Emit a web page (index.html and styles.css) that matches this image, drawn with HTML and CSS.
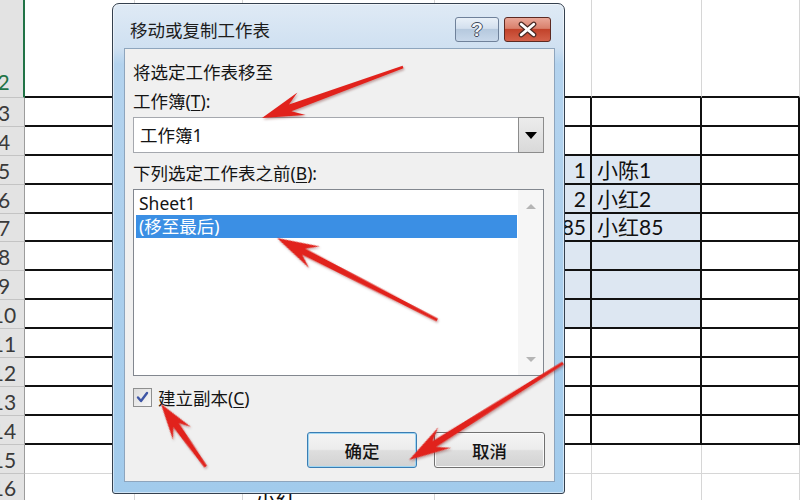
FILE: index.html
```html
<!DOCTYPE html>
<html>
<head>
<meta charset="utf-8">
<link rel="stylesheet" href="styles.css">
</head>
<body>
<div class="screen">
  <div class="sheet">
    <div class="hdr sel">2</div><div class="c r2"></div><div class="c r2"></div><div class="c r2"></div><div class="c r2"></div><div class="c r2"></div><div class="c r2"></div>
    <div class="hdr">3</div><div class="c t"></div><div class="c t"></div><div class="c t"></div><div class="c t"></div><div class="c t"></div><div class="c t"></div>
    <div class="hdr">4</div><div class="c t"></div><div class="c t"></div><div class="c t"></div><div class="c t"></div><div class="c t"></div><div class="c t"></div>
    <div class="hdr">5</div><div class="c t"></div><div class="c t"></div><div class="c t"></div><div class="c t blue num">1</div><div class="c t blue">小陈1</div><div class="c t"></div>
    <div class="hdr">6</div><div class="c t"></div><div class="c t"></div><div class="c t"></div><div class="c t blue num">2</div><div class="c t blue">小红2</div><div class="c t"></div>
    <div class="hdr">7</div><div class="c t"></div><div class="c t"></div><div class="c t"></div><div class="c t blue num">85</div><div class="c t blue">小红85</div><div class="c t"></div>
    <div class="hdr">8</div><div class="c t"></div><div class="c t"></div><div class="c t"></div><div class="c t blue"></div><div class="c t blue"></div><div class="c t"></div>
    <div class="hdr">9</div><div class="c t"></div><div class="c t"></div><div class="c t"></div><div class="c t blue"></div><div class="c t blue"></div><div class="c t"></div>
    <div class="hdr">10</div><div class="c t"></div><div class="c t"></div><div class="c t"></div><div class="c t blue"></div><div class="c t blue"></div><div class="c t"></div>
    <div class="hdr">11</div><div class="c t"></div><div class="c t"></div><div class="c t"></div><div class="c t"></div><div class="c t"></div><div class="c t"></div>
    <div class="hdr">12</div><div class="c t"></div><div class="c t"></div><div class="c t"></div><div class="c t"></div><div class="c t"></div><div class="c t"></div>
    <div class="hdr">13</div><div class="c t"></div><div class="c t"></div><div class="c t"></div><div class="c t"></div><div class="c t"></div><div class="c t"></div>
    <div class="hdr">14</div><div class="c t"></div><div class="c t"></div><div class="c t"></div><div class="c t"></div><div class="c t"></div><div class="c t"></div>
    <div class="hdr">15</div><div class="c"></div><div class="c"></div><div class="c"></div><div class="c"></div><div class="c"></div><div class="c"></div>
    <div class="hdr">16</div><div class="c"></div><div class="c"></div><div class="c low">小红</div><div class="c"></div><div class="c"></div><div class="c"></div>
  </div>

  <div class="dialog">
    <div class="titlebar">
      <div class="title">移动或复制工作表</div>
      <div class="caps">
        <div class="cap help">?</div>
        <div class="cap close">
          <svg width="47" height="25" viewBox="0 0 47 25">
            <path d="M17 7 L30 18 M30 7 L17 18" stroke="#4a2a24" stroke-width="5.5" stroke-linecap="round"/>
            <path d="M17 7 L30 18 M30 7 L17 18" stroke="#ffffff" stroke-width="3" stroke-linecap="round"/>
          </svg>
        </div>
      </div>
    </div>
    <div class="client">
      <div class="label">将选定工作表移至</div>
      <div class="label gap7">工作簿(<u>T</u>):</div>
      <div class="combo">
        <div class="combo-text">工作簿1</div>
        <div class="combo-btn"><span class="tri-down"></span></div>
      </div>
      <div class="label gap9">下列选定工作表之前(<u>B</u>):</div>
      <div class="listbox">
        <div class="items">
          <div class="item">Sheet1</div>
          <div class="item selected">(移至最后)</div>
        </div>
        <div class="vscroll">
          <span class="sa up"></span>
          <span class="sa down"></span>
        </div>
      </div>
      <div class="checkrow">
        <div class="checkbox">
          <svg width="17" height="17" viewBox="0 0 17 17">
            <path d="M4 8.5 L7 12 L13 4" fill="none" stroke="#3d55a5" stroke-width="2.4" stroke-linecap="round" stroke-linejoin="round"/>
          </svg>
        </div>
        <div class="checklabel">建立副本(<u>C</u>)</div>
      </div>
      <div class="buttons">
        <div class="btn default">确定</div>
        <div class="btn cancel">取消</div>
      </div>
    </div>
  </div>

  <svg class="arrows" width="800" height="500" viewBox="0 0 800 500">
    <defs>
      <filter id="sh" x="-20%" y="-20%" width="140%" height="140%">
        <feDropShadow dx="1" dy="1.5" stdDeviation="1.2" flood-color="#5a0000" flood-opacity="0.35"/>
      </filter>
    </defs>
    <g fill="#e1231d" filter="url(#sh)">
      <polygon transform="translate(262 118) rotate(160.1)" points="-150,-1.4 -30,-3.6 -42,-12 0,0 -42,12 -30,3.6 -150,1.4"/>
      <polygon transform="translate(277 238) rotate(-152.9)" points="-180,-1.4 -30,-3.6 -42,-12 0,0 -42,12 -30,3.6 -180,1.4"/>
      <polygon transform="translate(161 404) rotate(-125.5)" points="-77,-1.6 -26,-3.4 -36,-11 0,0 -36,11 -26,3.4 -77,1.6"/>
      <polygon transform="translate(409 460) rotate(147.8)" points="-182,-1.4 -30,-3.6 -42,-12 0,0 -42,12 -30,3.6 -182,1.4"/>
    </g>
  </svg>
</div>
</body>
</html>
```

FILE: styles.css
```css
* { box-sizing: border-box; }
html, body { margin: 0; padding: 0; background: #fff; }
.screen {
  position: relative;
  width: 800px;
  height: 500px;
  overflow: hidden;
  background: #fff;
}

/* spreadsheet */
.sheet {
  display: grid;
  grid-template-columns: 41px 110px 108px 192px 157px 110px 98px;
  grid-template-rows: 98px repeat(14, 28.9px);
  margin-left: -16px;
  font-family: "Lato", "Noto Sans CJK SC", sans-serif;
  font-size: 21px;
  color: #111;
}
.hdr {
  background: #e3e3e3;
  color: #3a3a3a;
  border-right: 1px solid #9c9c9c;
  border-bottom: 1px solid #c4c4c4;
  display: flex;
  align-items: flex-end;
  justify-content: center;
  line-height: 26px;
  font-size: 21px;
}
.hdr.sel {
  color: #217346;
  border-right: 2px solid #217346;
  padding-bottom: 2px;
}
.c {
  border-right: 1px solid #d6d6d6;
  border-bottom: 1px solid #d6d6d6;
  display: flex;
  align-items: flex-end;
  line-height: 26px;
  padding: 0 0 0 5px;
  white-space: nowrap;
  overflow: hidden;
}
.c.r2 { border-bottom: 2px solid #111; }
.c.t {
  border-bottom: 2px solid #111;
  border-right: 2px solid #111;
}
.c.blue { background: #dde7f2; }
.c.num { justify-content: flex-end; padding: 0 4px 0 0; }
.c.low {
  align-items: flex-start;
  padding: 15px 0 0 12px;
  line-height: 21px;
}

/* dialog window */
.dialog {
  position: absolute;
  left: 112px;
  top: 3px;
  width: 453px;
  height: 491px;
  border: 1px solid #34404e;
  border-radius: 7px 7px 3px 3px;
  background: linear-gradient(to bottom, #dfeaf5 0, #cfe0f1 44px, #b4d3ee 60px, #a2cbec 100%);
  display: flex;
  flex-direction: column;
  font-family: "Noto Sans", "Noto Sans CJK SC", sans-serif;
  color: #141414;
  box-shadow: 0 0 0 1px rgba(255,255,255,0.5) inset;
}
.titlebar {
  height: 44px;
  display: flex;
  align-items: flex-start;
  padding-left: 17px;
}
.title {
  margin-top: 15px;
  font-size: 17.5px;
  line-height: 22px;
  color: #1c1c1c;
}
.caps {
  margin-left: auto;
  margin-top: 13px;
  margin-right: 13px;
  display: flex;
  gap: 5px;
}
.cap {
  height: 25px;
  border-radius: 3px;
  display: flex;
  align-items: center;
  justify-content: center;
}
.help {
  width: 44px;
  border: 1px solid #6f819a;
  background: linear-gradient(to bottom, #e9f0f8 0, #d3e0ee 45%, #b6c9de 50%, #c8d8ea 100%);
  color: #f4f6f9;
  font-family: "Liberation Sans", sans-serif;
  font-weight: bold;
  font-size: 19px;
  text-shadow: 1px 0 0 #3d4a5c, -1px 0 0 #3d4a5c, 0 1px 0 #3d4a5c, 0 -1px 0 #3d4a5c;
}
.close {
  width: 47px;
  border: 1px solid #5d2a22;
  background: linear-gradient(to bottom, #e9a798 0, #d9806c 45%, #c2432b 50%, #d3614a 100%);
}

.client {
  flex: 1;
  margin: 0 9px 11px 11px;
  background: #f0f0f0;
  border: 1px solid #8ea5bd;
  padding: 12px 10px 0 8px;
  display: flex;
  flex-direction: column;
}
.label {
  font-size: 17.5px;
  line-height: 22px;
  white-space: nowrap;
}
.label u, .checklabel u { text-underline-offset: 2px; }
.gap7 { margin-top: 7px; }
.gap9 { margin-top: 9px; }

.combo {
  margin-top: 5px;
  height: 36px;
  border: 1px solid #a5a8ae;
  background: #fff;
  display: flex;
}
.combo-text {
  flex: 1;
  padding-left: 6px;
  font-size: 17.5px;
  line-height: 34px;
}
.combo-btn {
  width: 26px;
  border: 1px solid #8c8c8c;
  margin: -1px -1px -1px 0;
  background: linear-gradient(to bottom, #ececec, #d9d9d9);
  display: flex;
  align-items: center;
  justify-content: center;
}
.tri-down {
  width: 0;
  height: 0;
  border-left: 6px solid transparent;
  border-right: 6px solid transparent;
  border-top: 7px solid #000;
}

.listbox {
  margin-top: 5px;
  height: 187px;
  border: 1px solid #82878f;
  background: #fff;
  display: flex;
}
.items {
  flex: 1;
  padding: 2px 1px 0 2px;
}
.item {
  height: 23px;
  line-height: 23px;
  padding-left: 3px;
  font-size: 17.5px;
  white-space: nowrap;
}
.item.selected {
  background: #3b8fe4;
  color: #fff;
}
.vscroll {
  width: 25px;
  background: #f6f6f6;
  display: flex;
  flex-direction: column;
  justify-content: space-between;
  align-items: center;
  padding: 14px 0 13px;
}
.sa {
  width: 0;
  height: 0;
  border-left: 5px solid transparent;
  border-right: 5px solid transparent;
}
.sa.up { border-bottom: 5px solid #b5b5b5; }
.sa.down { border-top: 5px solid #b5b5b5; }

.checkrow {
  margin-top: 12px;
  height: 19px;
  display: flex;
  align-items: center;
}
.checkbox {
  width: 19px;
  height: 19px;
  border: 1px solid #8e8f8f;
  background: linear-gradient(135deg, #dcdcdc, #f8f8f8);
  display: flex;
  align-items: center;
  justify-content: center;
}
.checklabel {
  margin-left: 6px;
  font-size: 17.5px;
  line-height: 22px;
  white-space: nowrap;
}

.buttons {
  margin-top: 25px;
  display: flex;
  justify-content: flex-end;
  gap: 17px;
  margin-right: -1px;
}
.btn {
  height: 36px;
  border-radius: 3px;
  display: flex;
  align-items: center;
  justify-content: center;
  font-size: 17.5px;
  font-weight: 500;
  background: linear-gradient(to bottom, #f4f4f4 0, #ececec 48%, #dedede 52%, #d2d2d2 100%);
}
.btn.default {
  width: 110px;
  border: 1px solid #3a7db3;
  box-shadow: inset 0 0 0 1px #9fd6f2;
}
.btn.cancel {
  width: 111px;
  border: 1px solid #707070;
  box-shadow: inset 0 0 0 1px #fafafa;
}

.arrows {
  position: absolute;
  left: 0;
  top: 0;
  pointer-events: none;
}
```
